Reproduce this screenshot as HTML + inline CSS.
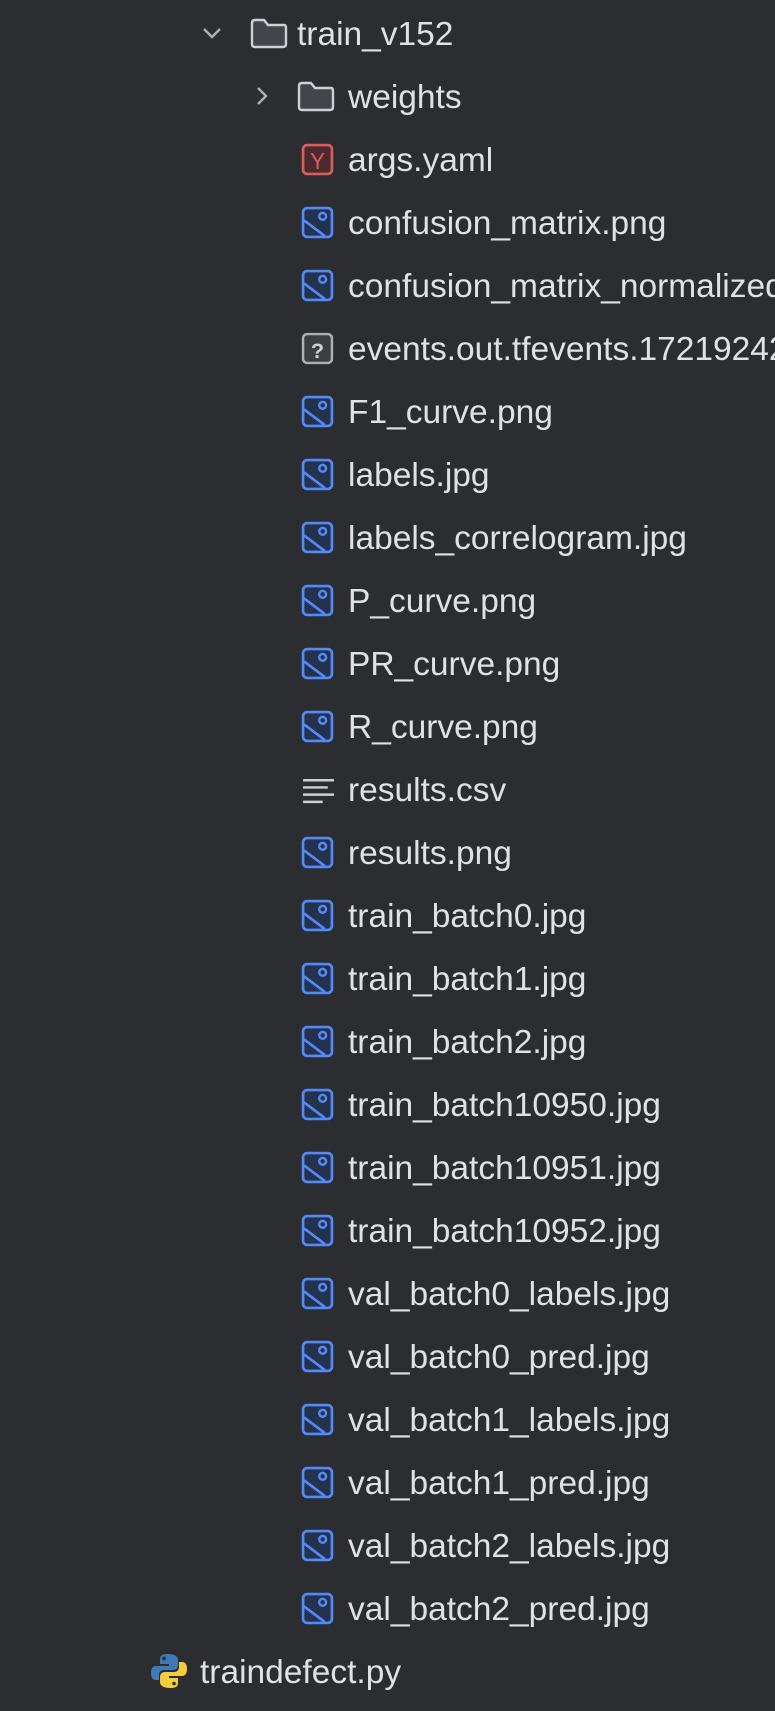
<!DOCTYPE html>
<html><head><meta charset="utf-8"><style>
html,body{margin:0;padding:0;background:#2b2d30;width:775px;height:1711px;overflow:hidden}
#c{position:absolute;left:0;top:0;width:775px;height:1711px;overflow:hidden}
.r{position:absolute;height:44px;white-space:nowrap;font-family:"Liberation Sans",sans-serif;font-size:33.5px;color:#dfe1e5;line-height:44px;overflow:hidden}
.r svg{position:absolute;top:4px}
.t{position:absolute;top:0}
</style></head><body>
<div id="c"></div>
<script>
const img='<svg width="33" height="33" viewBox="0 0 32 32"><rect x="2" y="2" width="28" height="28" rx="4" fill="#25324d" stroke="#548af7" stroke-width="2.6"/><path d="M3 14 L23 29" stroke="#548af7" stroke-width="2.6" fill="none"/><circle cx="21" cy="10" r="3.3" fill="none" stroke="#548af7" stroke-width="2.4"/></svg>';
const files=["confusion_matrix.png","confusion_matrix_normalized.png","?events.out.tfevents.1721924242","F1_curve.png","labels.jpg","labels_correlogram.jpg","P_curve.png","PR_curve.png","R_curve.png","=results.csv","results.png","train_batch0.jpg","train_batch1.jpg","train_batch2.jpg","train_batch10950.jpg","train_batch10951.jpg","train_batch10952.jpg","val_batch0_labels.jpg","val_batch0_pred.jpg","val_batch1_labels.jpg","val_batch1_pred.jpg","val_batch2_labels.jpg","val_batch2_pred.jpg"];
const folder='<svg width="38" height="32" viewBox="0 0 38 32"><path d="M2 6 Q2 3 5 3 L14 3 L18 8 L34 8 Q36 8 36 11 L36 27 Q36 30 33 30 L5 30 Q2 30 2 27 Z" fill="#43454a" stroke="#ced0d6" stroke-width="2.4"/></svg>';
let h='';
function row(i,iconX,icon,textX,text,extra){const y=33+63*i-20;h+=`<div class="r" style="top:${y}px;left:0;width:775px">${extra||''}<span style="position:absolute;left:${iconX}px;top:0">${icon}</span><span class="t" style="left:${textX}px">${text}</span></div>`;}
row(0,250,folder,297,"train_v152",'<svg style="left:200px" width="24" height="32" viewBox="0 0 24 32"><path d="M4 12 L12 20 L20 12" stroke="#aeb0b6" stroke-width="2.4" fill="none"/></svg>');
row(1,297,folder,348,"weights",'<svg style="left:250px" width="24" height="32" viewBox="0 0 24 32"><path d="M8 8 L16 16 L8 24" stroke="#aeb0b6" stroke-width="2.4" fill="none"/></svg>');
row(2,301,'<svg width="33" height="33" viewBox="0 0 32 32"><rect x="2" y="2" width="28" height="28" rx="4" fill="#4a2a2c" stroke="#db5c5c" stroke-width="2.6"/><text x="16" y="25" text-anchor="middle" font-family="Liberation Sans" font-size="22" fill="#db5c5c">Y</text></svg>',348,"args.yaml");
files.forEach((f,k)=>{let ic=img,t=f;
if(f[0]=='?'){t=f.slice(1);ic='<svg width="33" height="33" viewBox="0 0 32 32"><rect x="2" y="2" width="28" height="28" rx="4" fill="#3c3e42" stroke="#aeb0b6" stroke-width="2.4"/><text x="16" y="25" text-anchor="middle" font-family="Liberation Sans" font-weight="bold" font-size="21" fill="#ced0d6">?</text></svg>';}
if(f[0]=='='){t=f.slice(1);ic='<svg width="33" height="33" viewBox="0 0 32 32"><path d="M2 7H32M2 14H26M2 21H32M2 28H21" stroke="#ced0d6" stroke-width="2.4"/></svg>';}
row(3+k,301,ic,348,t);});
row(26,150,'<svg width="38" height="38" viewBox="0 0 38 38" style="top:1px"><path d="M18 2 C10 2 10 5 10 8 L10 12 L19 12 L19 14 L6 14 C2 14 1 18 1 21 C1 26 3 28 6 28 L9 28 L9 23 C9 20 11 18 14 18 L23 18 C26 18 28 16 28 13 L28 8 C28 4 24 2 18 2 Z" fill="#3e7ab5"/><circle cx="14" cy="6.5" r="1.8" fill="#2b2d30"/><path d="M20 36 C28 36 28 33 28 30 L28 26 L19 26 L19 24 L32 24 C36 24 37 20 37 17 C37 12 35 10 32 10 L29 10 L29 15 C29 18 27 20 24 20 L15 20 C12 20 10 22 10 25 L10 30 C10 34 14 36 20 36 Z" fill="#f4cd3c"/><circle cx="24" cy="31.5" r="1.8" fill="#2b2d30"/></svg>',200,"traindefect.py");
document.getElementById('c').innerHTML=h;
</script>
</body></html>
